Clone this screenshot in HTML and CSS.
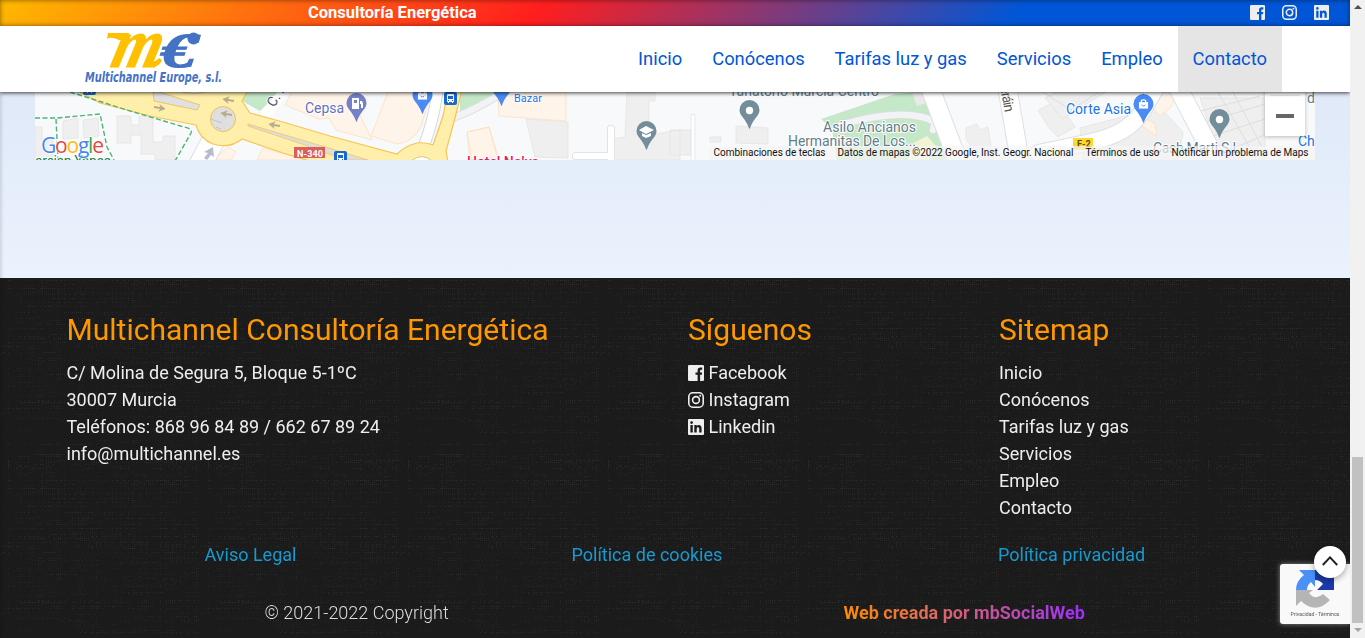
FILE: index.html
```html
<!DOCTYPE html>
<html lang="es">
<head>
<meta charset="utf-8">
<title>Multichannel Consultoría Energética</title>
<link rel="stylesheet" href="styles.css">
</head>
<body>
<svg class="defs" width="0" height="0">
  <symbol id="facebook" viewBox="0 0 16 16"><path fill="currentColor" d="M1.2 0h13.6A1.2 1.2 0 0 1 16 1.2v13.6a1.2 1.2 0 0 1-1.2 1.2H12.1V9.8h1.700l.3-2.400h-2V5.900c0-.7.2-1.200 1-1.200h1.100V2.500c-.2 0-.9-.1-1.700-.1-1.900 0-2.900 1.100-2.900 3.200v1.800H7.500v2.400h2.100V16H1.200A1.200 1.200 0 0 1 0 14.800V1.200A1.200 1.200 0 0 1 1.200 0Z"/></symbol>
  <symbol id="instagram" viewBox="0 0 16 16"><g fill="none" stroke="currentColor" stroke-width="1.6"><rect x=".8" y=".8" width="14.400" height="14.400" rx="4"/><circle cx="8" cy="8" r="3.400"/></g><circle cx="12.200" cy="3.800" r="1" fill="currentColor"/></symbol>
  <symbol id="linkedin" viewBox="0 0 16 16"><path fill="currentColor" fill-rule="evenodd" d="M1 0h14a1 1 0 0 1 1 1v14a1 1 0 0 1-1 1H1a1 1 0 0 1-1-1V1a1 1 0 0 1 1-1ZM2.400 6v7.600h2.400V6ZM3.600 2.200a1.400 1.400 0 1 0 0 2.800 1.400 1.400 0 0 0 0-2.800ZM6.300 6v7.600h2.400V9.800c0-2.200 2.500-2.200 2.500 0v3.800h2.400V9.200c0-3.800-3.900-4-4.900-2.100V6Z"/></symbol>
  <symbol id="pin" viewBox="0 0 20 29"><path fill="currentColor" d="M10 0A10 10 0 0 0 0 10c0 6 6 8 9.500 18.300q.5 1 1 0C14 18 20 16 20 10A10 10 0 0 0 10 0Z"/></symbol>
  <symbol id="bus" viewBox="0 0 13 13"><rect width="13" height="13" rx="2" fill="#1967d2"/><path fill="#fff" fill-rule="evenodd" d="M3 3q0-1 1-1h5q1 0 1 1v7H9v1H8v-1H5v1H4v-1H3Zm1 1v3h5V4Zm0 4v1h1V8Zm4 0v1h1V8Z"/></symbol>
  <symbol id="arrow" viewBox="0 0 12 8"><path fill="#b5ad8d" d="M0 4 7 0 5.500 3H12v2H5.500L7 8Z"/></symbol>
  <symbol id="bag" viewBox="0 0 12 12"><path fill="#fff" d="M1 4h10v7H1Z"/><path fill="none" stroke="#fff" stroke-width="1.300" d="M3.500 5V3.500q0-2 2.500-2t2.500 2V5"/><path fill="none" stroke="#4a8af4" d="M4 7q2 2.500 4 0"/></symbol>
</svg>

<div class="window">
<div class="page">
  <header class="header">
    <div class="topbar">
      <strong class="topbar-title">Consultoría Energética</strong>
      <div class="social">
        <svg><use href="#facebook"/></svg><svg><use href="#instagram"/></svg><svg><use href="#linkedin"/></svg>
      </div>
    </div>
    <nav class="nav">
      <svg class="logo" viewBox="84 26 140 66">
        <path fill="#ffc000" d="M108 33h21l-2 7-8 0q-8-4-12-1Z"/>
        <text class="logo-m" transform="translate(109 66.500) skewX(-14)" textLength="49" lengthAdjust="spacingAndGlyphs">m</text>
        <path fill="#ffc000" d="M147 62q8 1 12-4l3 2q-3 7-9 7h-6Z"/>
        <text class="logo-euro" transform="translate(160 66.500) skewX(-4)" textLength="36" lengthAdjust="spacingAndGlyphs">€</text>
        <circle cx="193.500" cy="38.500" r="6" fill="#4472c4"/>
        <text class="logo-name" x="85" y="82" textLength="137" lengthAdjust="spacingAndGlyphs">Multichannel Europe, s.l.</text>
      </svg>
      <div class="menu">
        <a>Inicio</a><a>Conócenos</a><a>Tarifas luz y gas</a><a>Servicios</a><a>Empleo</a><a class="active">Contacto</a>
      </div>
    </nav>
  </header>

  <main class="main">
    <svg class="map" viewBox="35 92 1280 68">
      <rect x="35" y="92" width="1280" height="68" fill="#f8f9fb"/>
      <!-- buildings -->
      <g fill="#efefef" stroke="#e3e3e3" stroke-width=".8">
        <path d="M63 121l15-3v20l-15 1ZM83 120l15-2 1 18-15 2ZM35 127h7v12h11v21H35ZM117 116h14v9h8v-9h14v26h10v-6h12v24h-20v-6h-14v-19h-10v8h-14ZM526 119l42 3v36l-33-1ZM627 92h28v9h-6v34l31-5v30h-69v-21l14-2ZM670 130h21v25h-21ZM736 126l32 2v16l-32-1ZM710 137h11v5h-11ZM966 128l11-4 3 6 8-3 5 33h-13l-14-21ZM1038 110l13-6 8 13 8-2 8 12-17 10-9-9Z"/>
        <path d="M1056 92h50l-43 27-18-21ZM1080 128l80-21 23 25-5 28h-95ZM1200 98h65v62h-45Z"/>
      </g>
      <g stroke="#dedede" fill="none"><path d="M1218 92l39 68M1233 92l29 55M1200 111l60-15M1206 122l59-18M1213 136l55-18M1222 153l43-18M1043 92l28 18 28-18"/></g>
      <g fill="#fff4ea" stroke="#fde0bd" stroke-width=".8">
        <path d="M292 92h57l23 48-36-10-7-12-10 1-34-14ZM388 92h43l-10 35q-8 15-24 17l-26-8ZM470 160l-3-28 22-5 9 33ZM498 92h68v29l-67-5ZM467 132l22-5 10 33h-27ZM228 147l8 5-5 8h-18ZM263 148l42 12h-48ZM1160 92h16l-5 15-11 9-10-11ZM1141 116l14 8 2 12-18-12Z"/>
      </g>
      <!-- parks -->
      <g fill="#c5e8c9"><path d="M247 92h32l-19 19-18-10ZM460 92h42l-42 24ZM821 119l74-25 25-2 12 14 20 30v24H837l-5-31Z"/><path d="M912 92h17l3 9-15 5Z" fill="#eaeaea"/></g>
      <path fill="#f2f3d3" d="M913 143l14-7 10 11-9 13h-20Z"/>
      <!-- minor streets -->
      <g fill="none" stroke-linecap="round" stroke-linejoin="round">
        <path stroke="#d9dce1" stroke-width="8" d="M841 125Q891 110 922 117T949 157M936 118l-3 12M611 164v-35M611 156h-35M455 117q20-7 50-26"/>
        <path stroke="#f1f3f5" stroke-width="6.500" d="M841 125Q891 110 922 117T949 157M936 118l-3 12M455 117q20-7 50-26"/>
        <path stroke="#fff" stroke-width="6.500" d="M611 164v-35M611 156h-35"/>
        <path stroke="#dfe1e5" stroke-width="4.500" d="M693 116v60"/><path stroke="#fff" stroke-width="3" d="M693 116v60"/>
        <path stroke="#d5d8de" stroke-width="12" d="M438 86q-3 32-16 65"/><path stroke="#fff" stroke-width="10" d="M438 86q-3 32-16 65"/>
        <path stroke="#dcdfe5" stroke-width="20" d="M928 82l34 90M1006 80l16 94M1174 80l49 94"/>
        <path stroke="#fff" stroke-width="18" d="M928 82l34 90M1006 80l16 94M1174 80l49 94"/>
        <path stroke="#dcdfe5" stroke-width="18" d="M1038 153l53-11q37-8 51-30l18-31"/>
        <path stroke="#fff" stroke-width="16" d="M1038 153l53-11q37-8 51-30l18-31"/>
        <path stroke="#dcdfe5" stroke-width="24" d="M196 173l18-34"/><path stroke="#fff" stroke-width="22" d="M196 173l18-34"/>
        <path stroke="#fff" stroke-width="10" d="M291 82l-25 33"/>
      </g>
      <!-- avenue and roundabout -->
      <path fill="#ffefaa" stroke="#f5c655" stroke-width="1.200" d="M76 90l24 13 50 13 46 9q4 14 17 19 17 5 29-5l41 14 30 9h135l-2-11 9-33 7-28h-14l-5 26-10 29q-8-3-16-2-12 3-20 11l-67-18-47-14-33-9-8-12 6-11Z"/>
      <path fill="#e0e0e0" stroke="#eac56c" d="M153 92l1 9 43 9 3-5-41-13Z"/>
      <path fill="#fff" stroke="#eac56c" d="M174 90q24 7 36 0Z"/>
      <path fill="#fff" stroke="#eac56c" d="M411 161q11-9 21 0Z"/>
      <circle cx="223" cy="119" r="12.500" fill="#dfdfdf" stroke="#f0c05a"/><path stroke="#bbc4d3" fill="none" d="m211 119 11 4m-6 4 5 2"/>
      <path fill="#deddd8" stroke="#eac56c" stroke-width=".8" d="M248 124l84 25 36 11h-23l-40-15-57-19Z"/>
      <g stroke="#4eb474" stroke-width="1.400" stroke-dasharray="5 2.500" fill="none"><path d="M70 92l57 18 57 17q9 2 7 6l-16 28M35 118h22l43-4 7 33 7 13M56 119l2 41"/></g>
      <use href="#arrow" transform="translate(223 95) rotate(10)" width="12" height="8"/><use href="#arrow" transform="translate(221 109) rotate(10)" width="12" height="8"/><use href="#arrow" transform="translate(269 120) rotate(10)" width="12" height="8"/><use href="#arrow" transform="translate(165 113) rotate(190)" width="12" height="8"/>
      <path fill="#b6bccd" d="m213 147 1 10-3-2-4 5-3-2 4-5-4-1Z"/>
      <!-- markers -->
      <use href="#pin" x="346" y="93" width="21" height="29" color="#7480c8"/>
      <path fill="#fff" d="M352 98h7v11h-7Zm8 3h2l1 2v5h-2v-4h-1Z"/><path fill="#7480c8" d="M354 100h3v3h-3Z"/>
      <use href="#pin" x="412" y="85" width="21" height="29" color="#4a8af4"/><use href="#bag" x="417" y="89" width="11" height="12"/>
      <use href="#pin" x="491" y="77" width="21" height="29" color="#4a8af4"/>
      <use href="#pin" x="636" y="121" width="21" height="29" color="#738e9a"/><path fill="#fff" d="m639 130 7-4 8 4-8 4Zm3 3 4 2 5-2v3l-5 2-4-2Z"/>
      <use href="#pin" x="739" y="100" width="21" height="29" color="#738e9a"/><circle cx="749.500" cy="110.500" r="3.700" fill="#fff"/>
      <use href="#pin" x="1133" y="94" width="21" height="29" color="#4a8af4"/><use href="#bag" x="1138" y="98" width="11" height="12"/>
      <use href="#pin" x="1209" y="109" width="21" height="29" color="#738e9a"/><circle cx="1219.500" cy="119.500" r="3.700" fill="#fff"/>
      <use href="#bus" x="444" y="92" width="13" height="13"/><use href="#bus" x="334" y="151" width="13" height="13"/><use href="#bus" x="83" y="82" width="13" height="13"/>
      <rect x="294" y="147" width="31" height="11" fill="#d8605e"/><text class="road" x="297" y="156.500" fill="#fff" textLength="26">N-340</text>
      <rect x="1073" y="138" width="20" height="12" fill="#fdd82f"/><text class="road" x="1077" y="147" fill="#554c20">F-2</text>
      <!-- labels -->
      <g class="labels">
        <text x="305" y="113" fill="#6270c0" textLength="39">Cepsa</text>
        <text class="small" x="514" y="102" fill="#1a73e8" textLength="28">Bazar</text>
        <text x="729" y="96" textLength="150">Tanatorio Murcia Centro</text>
        <text x="823" y="132" textLength="93">Asilo Ancianos</text>
        <text x="788" y="146" textLength="128">Hermanitas De Los...</text>
        <text x="1066" y="114" fill="#1a73e8" textLength="65">Corte Asia</text>
        <text x="1153" y="153" textLength="87">Cash Marti S.L</text>
        <text x="467" y="167" fill="#e91e63" textLength="72" class="hotel">Hotel Nelva</text>
        <text x="35" y="166" fill="#238348" textLength="76">arsian Yanee</text>
        <text transform="translate(274 108) rotate(-57)" fill="#555">C. Mar</text>
        <text transform="translate(999 80) rotate(80)" fill="#555" textLength="33">Beráin</text>
        <text x="1307" y="103">d</text><text x="1298" y="146" fill="#1a73e8">Ch</text>
      </g>
      <text class="google" x="41" y="153" textLength="63"><tspan fill="#4285f4">G</tspan><tspan fill="#ea4335">o</tspan><tspan fill="#fbbc05">o</tspan><tspan fill="#4285f4">g</tspan><tspan fill="#34a853">l</tspan><tspan fill="#ea4335">e</tspan></text>
      <rect x="709" y="146" width="606" height="14" fill="#f5f5f5" opacity=".7"/>
      <g class="attribution"><text x="713.500" y="156" textLength="112">Combinaciones de teclas</text><text x="837.500" y="156" textLength="236">Datos de mapas ©2022 Google, Inst. Geogr. Nacional</text><text x="1085.500" y="156" textLength="74">Términos de uso</text><text x="1171.500" y="156" textLength="137">Notificar un problema de Maps</text></g>
      <rect class="zoom-control" x="1265" y="80" width="40" height="56" rx="1" fill="#fff"/><path fill="#e6e6e6" d="M1270 95h30v1h-30Z"/><path fill="#666" d="M1276 114h18v4h-18Z"/>
    </svg>
  </main>

  <footer class="footer">
    <canvas class="texture" width="1350" height="360"></canvas>
    <div class="columns">
      <section class="company"><h2>Multichannel Consultoría Energética</h2><p>C/ Molina de Segura 5, Bloque 5-1ºC</p><p>30007 Murcia</p><p>Teléfonos: 868 96 84 89 / 662 67 89 24</p><p>info@multichannel.es</p></section>
      <section><h2>Síguenos</h2><p><svg><use href="#facebook"/></svg>Facebook</p><p><svg><use href="#instagram"/></svg>Instagram</p><p><svg><use href="#linkedin"/></svg>Linkedin</p></section>
      <section><h2>Sitemap</h2><p>Inicio</p><p>Conócenos</p><p>Tarifas luz y gas</p><p>Servicios</p><p>Empleo</p><p>Contacto</p></section>
    </div>
    <div class="legal"><a>Aviso Legal</a><a>Política de cookies</a><a>Política privacidad</a></div>
    <div class="credits"><span class="copyright">© 2021-2022 Copyright</span><strong class="author">Web creada por mbSocialWeb</strong></div>
  </footer>
  <div class="captcha">
    <svg viewBox="0 0 40 40"><path fill="#1c3aa9" d="M20 1q9 0 15 7l4-5v18H22l6-6q-3-4-8-4Z"/><path fill="#4a90f7" d="M20 1H4l5 5q-8 6-8 15h11q0-5 4-8l4 5Z"/><path fill="#b5b5b5" d="M1 21v16l5-5q15 14 29-1l-7-6q-8 7-14-1l4-3Z"/></svg>
    <span>Privacidad - Términos</span>
  </div>
  <div class="to-top"><svg viewBox="0 0 16 10"><path d="m.8 9 7.200-7.600L15.200 9"/></svg></div>
</div>
<div class="scrollbar"><i class="arrow-up"></i><i class="thumb"></i><i class="arrow-down"></i></div>
</div>
<script src="texture.js"></script>
</body>
</html>
```
FILE: styles.css
```css
* { box-sizing: border-box; }
body { margin: 0; overflow: hidden; font-family: Roboto, "Liberation Sans", sans-serif; }
.defs { position: absolute; }
.window { display: flex; width: 1365px; height: 638px; }
.page { position: relative; width: 1350px; height: 638px; overflow: hidden; background: linear-gradient(#dfe9f8 92px, #ebf2fd 278px); }
.page::after { content: ""; position: absolute; inset: 0 auto 0 0; width: 4px; background: linear-gradient(90deg, rgba(0,0,0,.1), transparent); }
.header { position: relative; z-index: 1; box-shadow: 0 1px 4px rgba(0,0,0,.75); }
.topbar { height: 26px; padding: 0 21px 0 308px; display: flex; align-items: center; justify-content: space-between; background: linear-gradient(135deg, #ffb900 0%, #ff1e1e 40%, #0056d6 75%); box-shadow: inset 0 0 5px rgba(0,0,0,.5); color: #fff; }
.topbar-title { font-size: 16.5px; line-height: 24px; padding-bottom: 1px; }
.social { display: flex; gap: 17px; padding-bottom: 2px; color: #eee; }
.social svg { width: 15px; height: 15px; }
.nav { height: 66px; background: #fff; padding: 0 68px 0 84px; display: flex; justify-content: space-between; }
.logo { width: 140px; height: 66px; }
.logo-m { font: italic bold 70px "Liberation Serif", serif; fill: #ffc000; stroke: #ffc000; stroke-width: 1px; }
.logo-euro { font: italic bold 49px "Liberation Serif", serif; fill: #4472c4; stroke: #4472c4; stroke-width: 1px; }
.logo-name { font: italic bold 13.5px "DejaVu Sans Condensed", "DejaVu Sans", sans-serif; fill: #4472c4; }
.menu { display: flex; font-size: 18.35px; line-height: 65px; color: #0056d6; }
.menu a { padding: 0 15px; }
.menu .active { background: #e5e5e5; }
.main { height: 186px; padding: 0 35px; }
.map { display: block; width: 1280px; height: 68px; }
.labels text { font-size: 14px; paint-order: stroke; stroke: #fff; stroke-width: 2px; }
.labels text:not([fill]) { fill: #607d8b; }
.labels .small { font-size: 11px; }
.labels .hotel { font-weight: 500; }
.road { font-size: 9px; font-weight: bold; }
.google { font: 500 21px "Open Sans", sans-serif; paint-order: stroke; stroke: #fff; stroke-width: 1.5px; }
.attribution { font-size: 10px; fill: #111; }
.zoom-control { filter: drop-shadow(0 1px 2px rgba(0,0,0,.25)); }
.footer { position: relative; height: 360px; padding: 31px 66.5px 0; background: #1b1b1b; color: #eee; }
.texture { position: absolute; inset: 0; }
.columns { position: relative; display: grid; grid-template-columns: 621.5px 311px 1fr; height: 212px; }
.columns h2 { margin: 0 0 8px; font-weight: 400; font-size: 30.06px; line-height: 42px; color: #ff9800; }
.columns p { margin: 0; font-size: 18px; line-height: 27px; display: flex; align-items: center; }
.columns svg { width: 16px; height: 16px; margin-right: 4.5px; }
.legal { position: relative; display: grid; grid-template-columns: 367px 426.5px 1fr; padding: 20px 0 0 138px; line-height: 27px; font-size: 18px; color: #189ad0; }
.credits { position: relative; display: grid; grid-template-columns: 579px 1fr; padding: 31px 0 0 198px; font-size: 18px; line-height: 27px; }
.copyright { font-weight: 300; color: #ddd; }
.author { justify-self: start; background: linear-gradient(90deg, #ff8c00, #a02fff); background-clip: text; -webkit-background-clip: text; color: transparent; }
.captcha { position: absolute; right: 0; bottom: 14px; width: 70px; height: 60px; border-radius: 3px 0 0 3px; background: #f9f9f9; box-shadow: 0 0 5px #888; display: flex; flex-direction: column; align-items: center; padding-top: 5px; }
.captcha svg { width: 40px; height: 40px; }
.captcha span { font-size: 5.1px; line-height: 10px; color: #555; white-space: nowrap; }
.to-top { position: absolute; left: 1314px; top: 546px; width: 32px; height: 32px; border-radius: 50%; background: #fff; display: grid; place-items: center; box-shadow: 0 2px 6px rgba(0,0,0,.35); }
.to-top svg { width: 16px; height: 10px; margin-top: -2px; fill: none; stroke: #222; stroke-width: 2; }
.scrollbar { width: 15px; background: #f1f1f1; display: flex; flex-direction: column; align-items: center; padding: 5px 0 4px; }
.arrow-up { border: 4px solid transparent; border-top: 0; border-bottom-color: #505050; }
.thumb { width: 11px; height: 166px; margin-top: auto; background: #c1c1c1; }
.arrow-down { border: 4px solid transparent; border-bottom: 0; border-top-color: #a3a3a3; margin-top: 5px; margin-bottom: 2px; }
```
FILE: texture.js
```js
// Woven noise: faint dots on a 2px grid, denser along some rows and columns.
const canvas = document.querySelector('.texture');
const ctx = canvas.getContext('2d');
let seed = 91;
const random = () => (seed = (seed * 16807) % 2147483647) / 2147483647;
const size = 200;
const cells = size / 2;
const tile = document.createElement('canvas');
tile.width = tile.height = size;
const t = tile.getContext('2d');
const rows = Array.from({ length: cells }, random);
const cols = Array.from({ length: cells }, random);
for (let y = 0; y < cells; y++) {
  let run = 0;
  for (let x = 0; x < cells; x++) {
    if (random() < 0.12) run = random();
    const strength = rows[y] * 0.4 + cols[x] * 0.3 + run * 0.5;
    if (strength > 0.6 && random() < 0.65) {
      t.fillStyle = `rgba(255,255,255,${(strength - 0.5) * 0.18})`;
      t.fillRect(x * 2, y * 2, 1, 1);
    }
  }
}
ctx.fillStyle = ctx.createPattern(tile, 'repeat');
ctx.fillRect(0, 0, 1350, 360);
```
